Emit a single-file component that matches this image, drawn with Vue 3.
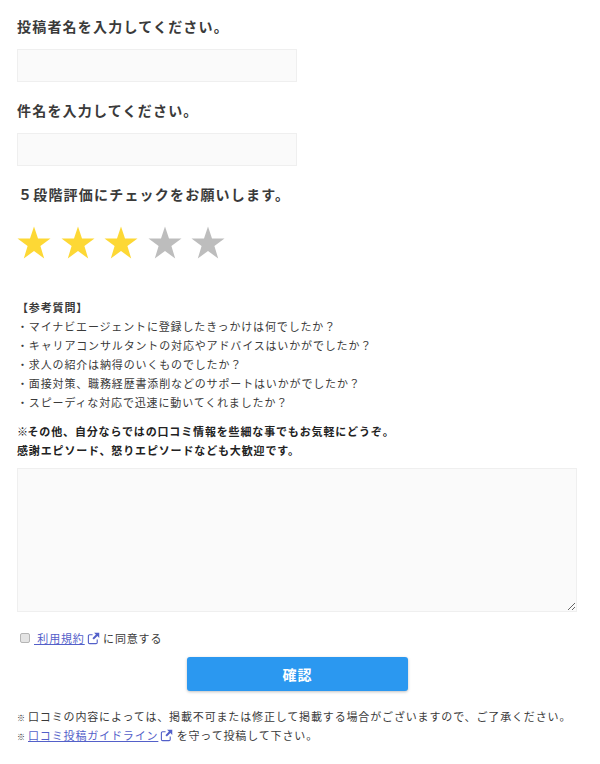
<template>
  <form class="review-form" @submit.prevent>
    <label class="heading" for="author">投稿者名を入力してください。</label>
    <input id="author" class="field" type="text">

    <label class="heading second" for="subject">件名を入力してください。</label>
    <input id="subject" class="field" type="text">

    <p class="heading rate-title">５段階評価にチェックをお願いします。</p>
    <div class="stars">
      <svg v-for="n in 5" :key="n" class="star" :class="{ on: n <= rating }" viewBox="0 0 34 33" @click="rating = n">
        <polygon points="17,0.5 21,12.5 33.5,12.5 23.4,20 27.2,32.5 17,25 6.8,32.5 10.6,20 0.5,12.5 13,12.5" />
      </svg>
    </div>

    <div class="questions">
      <p class="q-title">【参考質問】</p>
      <p v-for="q in questions" :key="q">{{ q }}</p>
    </div>

    <p class="note"><span class="mark-bold">※</span>その他、自分ならではの口コミ情報を些細な事でもお気軽にどうぞ。<br>感謝エピソード、怒りエピソードなども大歓迎です。</p>

    <textarea class="body-text"></textarea>

    <label class="agree">
      <input type="checkbox">
      <span><a class="link" href="#">&nbsp;利用規約</a><svg class="ext" viewBox="0 0 14 14"><path d="M11 8v3.2a1.3 1.3 0 0 1-1.3 1.3H2.8a1.3 1.3 0 0 1-1.3-1.3V4.300a1.300 1.300 0 0 1 1.300-1.300H6" /><path class="solid" d="M7.600 0.800h5.600v5.600l-2-2-3.800 3.800-1.600-1.600 3.800-3.800z" /></svg> に同意する</span>
    </label>

    <button class="submit" type="submit">確認</button>

    <ul class="foot">
      <li><span class="mark">※</span>口コミの内容によっては、掲載不可または修正して掲載する場合がございますので、ご了承ください。</li>
      <li><span class="mark">※</span><a class="link" href="#">口コミ投稿ガイドライン</a><svg class="ext" viewBox="0 0 14 14"><path d="M11 8v3.2a1.3 1.3 0 0 1-1.3 1.3H2.8a1.3 1.3 0 0 1-1.3-1.3V4.300a1.300 1.300 0 0 1 1.300-1.300H6" /><path class="solid" d="M7.600 0.800h5.600v5.600l-2-2-3.800 3.800-1.600-1.600 3.800-3.800z" /></svg> を守って投稿して下さい。</li>
    </ul>
  </form>
</template>

<script setup>
import { ref } from "vue"

const rating = ref(3)

const questions = [
  "・マイナビエージェントに登録したきっかけは何でしたか？",
  "・キャリアコンサルタントの対応やアドバイスはいかがでしたか？",
  "・求人の紹介は納得のいくものでしたか？",
  "・面接対策、職務経歴書添削などのサポートはいかがでしたか？",
  "・スピーディな対応で迅速に動いてくれましたか？",
]
</script>

<style scoped>
.review-form {
  display: flex;
  flex-direction: column;
  align-items: flex-start;
  padding: 16px 23px 0 17px;
  color: #3a3a3a;
  font-family: "Noto Sans CJK JP", "Noto Sans", sans-serif;
  font-size: 11px;
  letter-spacing: 0.85px;
}
p {
  margin: 0;
}
.heading {
  font-size: 14px;
  line-height: 21px;
  font-weight: 700;
  letter-spacing: 1.2px;
}
.second {
  margin-top: 18px;
}
.field {
  width: 280px;
  height: 33px;
  margin-top: 12px;
  box-sizing: border-box;
  background: #fafafa;
  border: 1px solid #efefef;
  padding: 0 8px;
}
.rate-title {
  margin-top: 18px;
  padding-left: 1px;
}
.stars {
  display: flex;
  gap: 9.500px;
  margin-top: 21px;
}
.star {
  width: 34px;
  height: 33px;
  fill: #bdbdbd;
}
.star.on {
  fill: #fdd835;
}
.questions {
  margin-top: 38.600px;
  line-height: 19.100px;
}
.q-title {
  font-weight: 700;
}
.note {
  margin-top: 9.500px;
  font-weight: 700;
  line-height: 19px;
  color: #222;
}
.mark-bold {
  letter-spacing: -0.500px;
}
.body-text {
  display: block;
  width: 100%;
  height: 144px;
  margin-top: 8px;
  box-sizing: border-box;
  background: #fafafa;
  border: 1px solid #efefef;
  padding: 8px;
}
.agree {
  display: flex;
  align-items: center;
  gap: 3px;
  margin-top: 17px;
  line-height: 19px;
}
.agree input {
  appearance: none;
  width: 10px;
  height: 10px;
  margin: 0 0 0 3px;
  background: #e4e4e4;
  border: 1px solid #b5b5b5;
  border-radius: 2px;
}
.agree span {
  margin-left: 1px;
}
.link {
  color: #5360c9;
  text-decoration: underline;
}
.ext {
  width: 13px;
  height: 13px;
  margin-left: 2px;
  vertical-align: -2px;
  fill: none;
  stroke: #5360c9;
  stroke-width: 1.200;
}
.ext .solid {
  fill: #5360c9;
  stroke: none;
}
.submit {
  align-self: center;
  width: 221px;
  height: 34px;
  margin: 9px 0 0 1px;
  background: #2b98f0;
  color: #fff;
  border: 0;
  border-radius: 3px;
  box-shadow: 0 1px 3px rgba(0, 0, 0, 0.25);
  font: inherit;
  font-size: 14px;
  font-weight: 700;
  letter-spacing: 1px;
}
.foot {
  list-style: none;
  margin: 16px 0 0;
  padding: 0;
  line-height: 19px;
}
.mark {
  display: inline-block;
  width: 11px;
  font-size: 8px;
  font-weight: 700;
  line-height: 1;
  letter-spacing: 0;
  color: #222;
  opacity: 0.99;
}
</style>

<style>
body {
  background: #fff;
}
</style>
